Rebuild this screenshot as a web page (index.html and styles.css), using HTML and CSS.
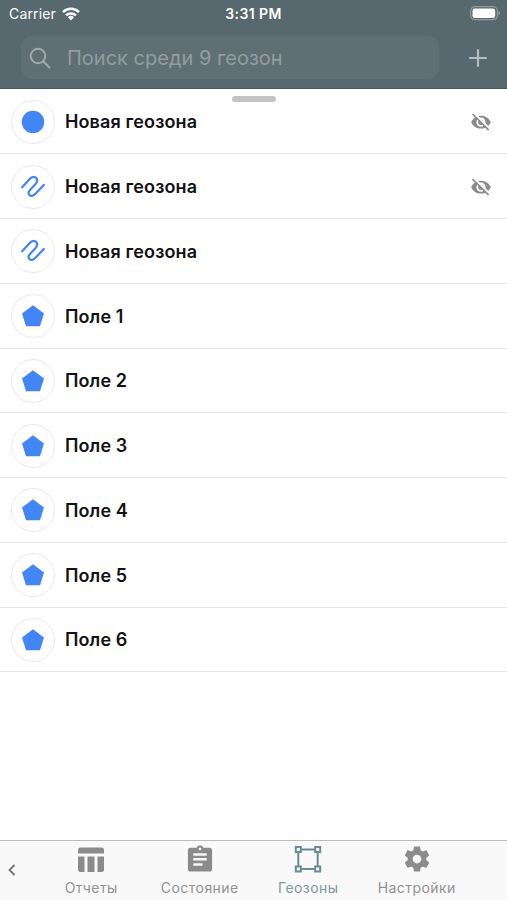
FILE: index.html
```
<!DOCTYPE html>
<html lang="ru">
<head>
<meta charset="utf-8">
<meta name="viewport" content="width=device-width">
<title>Геозоны</title>
<link rel="stylesheet" href="styles.css">
</head>
<body>
<svg class="defs" aria-hidden="true">
  <symbol id="circle" viewBox="0 0 24 24"><circle cx="12" cy="12" r="11.2" fill="#4285f4"/></symbol>
  <symbol id="line" viewBox="0 0 24 24"><path d="M1.200 12.300 8.500 4.200C10.800 1.600 13.300 1.400 15 2.900s1.600 3.700 0 5.500L9 15c-1.600 1.800-1.900 3.700-.6 5s3.800 1.300 5.600-.7l8.800-9.300" fill="none" stroke="#4285f4" stroke-width="2.200" stroke-linecap="round"/></symbol>
  <symbol id="polygon" viewBox="0 0 24 24"><path d="M12 1.200 23 9.400 19 22.300H5L1 9.400Z" fill="#4285f4"/></symbol>
  <symbol id="hidden" viewBox="0 0 22 20"><path fill="#8b8b8b" fill-rule="evenodd" d="M1.200 10.200C3 6.100 6.600 3.800 11 3.800s8 2.300 9.800 6.400c-1.800 4.100-5.400 6.400-9.800 6.400s-8-2.300-9.800-6.400ZM11 5.600a4.600 4.600 0 1 0 0 9.200 4.600 4.600 0 0 0 0-9.200Z"/><circle cx="11" cy="10.200" r="2.700" fill="#8b8b8b"/><path d="m3.700.900 16.100 16.100" stroke="#fff" stroke-width="2"/><path d="m2.500 2 16.200 16.200" stroke="#8b8b8b" stroke-width="1.700"/></symbol>
</svg>
<header class="header">
  <div class="status">
    <div class="carrier"><span>Carrier</span>
      <svg class="wifi" viewBox="0 0 18 14"><g fill="none" stroke="#fff" stroke-width="2.500"><path d="M1 5.100a11.500 11.500 0 0 1 16 0"/><path d="M4 8.400a7.200 7.200 0 0 1 10 0"/></g><path d="M5.900 10.200a4.700 4.700 0 0 1 6.200 0L9 13.400Z" fill="#fff"/></svg>
    </div>
    <time>3:31 PM</time>
    <svg class="battery" viewBox="0 0 31 15"><rect x=".7" y=".7" width="26.600" height="13" rx="4" fill="none" stroke="#8f9b9f" stroke-width="1.200"/><rect x="2.500" y="2.400" width="22.700" height="9.700" rx="2.300" fill="#fff"/><path d="M28.500 5v4.500c2-.7 2-3.800 0-4.500Z" fill="#8f9b9f"/></svg>
  </div>
  <div class="tools">
    <div class="search">
      <svg viewBox="0 0 22 22"><circle cx="9" cy="9" r="7.300"/><path d="m14.200 14.200 6.200 6.300"/></svg>
      <span>Поиск среди 9 геозон</span>
    </div>
    <svg class="plus" viewBox="0 0 20 20"><path d="M10 1.200v17.600M1.200 10h17.600"/></svg>
  </div>
</header>
<main class="list">
  <div class="handle"></div>
  <div class="row"><span class="badge"><svg><use href="#circle"/></svg></span><span class="name">Новая геозона</span><svg class="eye"><use href="#hidden"/></svg></div>
  <div class="row"><span class="badge"><svg><use href="#line"/></svg></span><span class="name">Новая геозона</span><svg class="eye"><use href="#hidden"/></svg></div>
  <div class="row"><span class="badge"><svg><use href="#line"/></svg></span><span class="name">Новая геозона</span></div>
  <div class="row"><span class="badge"><svg><use href="#polygon"/></svg></span><span class="name">Поле 1</span></div>
  <div class="row"><span class="badge"><svg><use href="#polygon"/></svg></span><span class="name">Поле 2</span></div>
  <div class="row"><span class="badge"><svg><use href="#polygon"/></svg></span><span class="name">Поле 3</span></div>
  <div class="row"><span class="badge"><svg><use href="#polygon"/></svg></span><span class="name">Поле 4</span></div>
  <div class="row"><span class="badge"><svg><use href="#polygon"/></svg></span><span class="name">Поле 5</span></div>
  <div class="row"><span class="badge"><svg><use href="#polygon"/></svg></span><span class="name">Поле 6</span></div>
</main>
<nav class="tabs">
  <svg class="back" viewBox="0 0 8 12"><path d="M6.500 1 1.500 6l5 5"/></svg>
  <div class="tab"><svg viewBox="0 0 28 28"><path d="M3.500 2.500h21a2.500 2.500 0 0 1 2.500 2.500v3.500H1V5a2.500 2.500 0 0 1 2.500-2.500ZM1 11.500h6.500V27h-4A2.500 2.500 0 0 1 1 24.500ZM10.500 11.500h7V27h-7ZM20.500 11.500H27v13a2.500 2.500 0 0 1-2.500 2.500h-4Z"/></svg><span>Отчеты</span></div>
  <div class="tab"><svg viewBox="0 0 28 28"><path fill-rule="evenodd" d="M10.500 2.800a3.700 3.700 0 0 1 7 0h6a2.600 2.600 0 0 1 2.600 2.600v18.600a2.600 2.600 0 0 1-2.600 2.600h-19a2.600 2.600 0 0 1-2.600-2.600V5.400a2.600 2.600 0 0 1 2.600-2.600ZM14 2.600a1.300 1.300 0 1 0 0 2.600 1.300 1.300 0 0 0 0-2.600ZM7.300 8.200v2.500h13.400V8.200ZM7.300 13.100v2.500h13.400v-2.500ZM7.300 18.300v2.500h9.200v-2.500Z"/></svg><span>Состояние</span></div>
  <div class="tab active"><svg viewBox="0 0 28 28"><g fill="none" stroke="#688b94" stroke-width="2"><path d="M7 4.500h14M7 24h14M4.300 7.500V21M23.700 7.500V21"/><path d="M1.800 2h5v5h-5ZM21.200 2h5v5h-5ZM1.800 21.500h5v5h-5ZM21.200 21.500h5v5h-5Z"/></g></svg><span>Геозоны</span></div>
  <div class="tab"><svg class="gear" viewBox="0 0 24 24"><path d="M19.430 12.980c.04-.32.070-.64.070-.98s-.03-.66-.07-.98l2.110-1.650c.19-.15.240-.42.120-.64l-2-3.460c-.12-.22-.39-.3-.61-.22l-2.490 1c-.52-.4-1.080-.73-1.690-.98l-.38-2.650A.488.488 0 0 0 14 2h-4c-.25 0-.46.180-.49.420l-.38 2.650c-.61.250-1.170.590-1.690.980l-2.490-1c-.23-.09-.49 0-.61.220l-2 3.460c-.13.220-.07.490.12.640l2.110 1.650c-.04.320-.07.650-.07.980s.03.660.07.980l-2.110 1.650c-.19.150-.24.420-.12.640l2 3.460c.12.220.39.300.61.220l2.490-1c.52.400 1.080.730 1.690.980l.38 2.650c.03.240.24.420.49.420h4c.25 0 .46-.18.490-.42l.38-2.650c.61-.25 1.170-.59 1.690-.98l2.490 1c.23.090.49 0 .61-.22l2-3.460c.12-.22.070-.49-.12-.64l-2.110-1.650ZM12 15.500A3.500 3.500 0 1 1 12 8.500a3.500 3.500 0 0 1 0 7Z"/></svg><span>Настройки</span></div>
</nav>
</body>
</html>
```

FILE: styles.css
```
* { box-sizing: border-box; }
body { margin: 0; height: 900px; display: flex; flex-direction: column; overflow: hidden; background: #fff; font-family: Inter, "Liberation Sans", sans-serif; color: #111; }
svg { display: block; flex: none; }
.defs { position: absolute; width: 0; height: 0; }
.header { height: 89px; flex: none; background: #57686e; border-bottom: 1px solid #46565c; }
.status { height: 27px; display: grid; grid-template-columns: 1fr auto 1fr; align-items: center; padding: 0 6px 0 9px; color: #fff; }
.carrier { display: flex; align-items: center; gap: 6px; font-size: 14px; letter-spacing: .15px; }
.wifi { width: 18px; height: 14px; }
.status time { font-size: 14px; font-weight: 600; letter-spacing: .4px; margin-right: 3px; }
.battery { width: 31px; height: 15px; justify-self: end; }
.tools { display: flex; align-items: center; padding: 9px 19px 0 21px; justify-content: space-between; }
.search { width: 418px; height: 43px; border-radius: 11px; background: #606f74; display: flex; align-items: center; padding-left: 8px; gap: 16px; color: #929da0; font-size: 20px; }
.search svg { width: 22px; height: 22px; fill: none; stroke: #a0a9ac; stroke-width: 2; stroke-linecap: round; }
.plus { width: 20px; height: 20px; fill: none; stroke: #b4bcbe; stroke-width: 2.2; }
.list { flex: 1; position: relative; padding-top: .5px; }
.handle { position: absolute; top: 7px; left: 232px; width: 44px; height: 6px; border-radius: 3px; background: #c3c3c3; }
.row { height: 64.75px; display: flex; align-items: center; padding: 1px 15px 0 11px; border-bottom: 1px solid #e4e5e6; }
.badge { width: 44px; height: 44px; flex: none; border: 1px solid #e9eaec; border-radius: 50%; display: flex; align-items: center; justify-content: center; }
.badge svg { width: 24px; height: 24px; }
.name { flex: 1; margin-left: 10px; font-size: 18px; font-weight: 600; letter-spacing: .12px; }
.eye { width: 22px; height: 20px; }
.tabs { height: 60px; flex: none; display: flex; background: #f9f9f9; border-top: 1px solid #bcbcbc; }
.back { width: 8px; height: 12px; margin: 23px 21px 0 8px; fill: none; stroke: #777; stroke-width: 1.8; }
.tab { width: 108.5px; display: flex; flex-direction: column; align-items: center; padding-top: 4px; color: #929292; font-size: 14px; }
.tab svg { width: 28px; height: 28px; fill: #8b8b8b; }
.tab svg.gear { width: 30px; height: 30px; margin: -1px 0; }
.tab span { margin-top: 7px; line-height: 16px; letter-spacing: .45px; }
.tab.active { color: #84979c; }
```
